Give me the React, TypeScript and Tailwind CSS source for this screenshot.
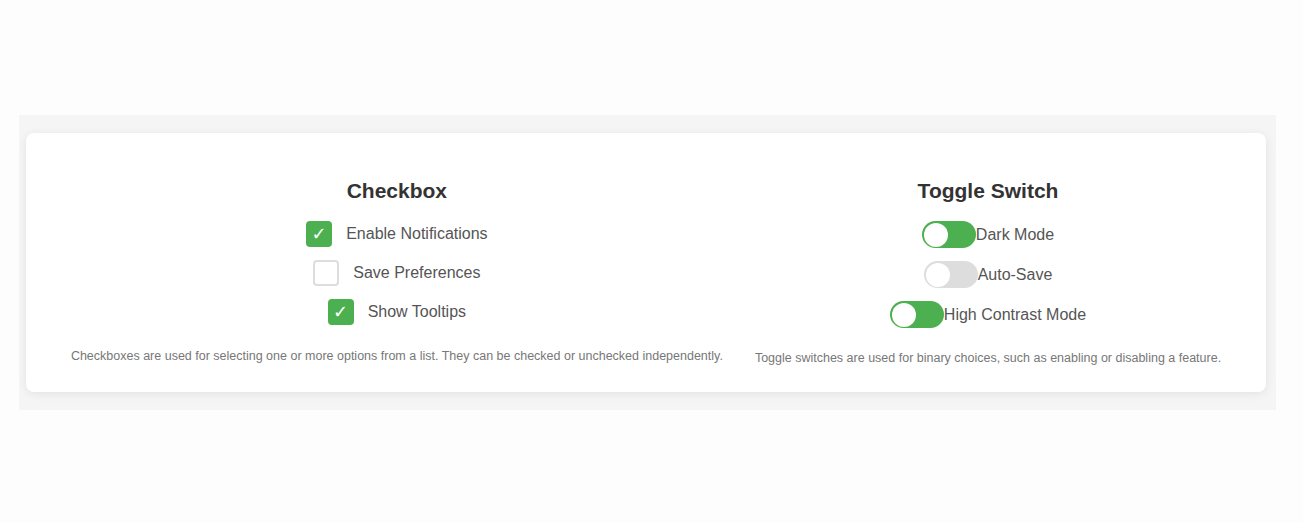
import React, { useState } from "react";

const font = { fontFamily: '"Liberation Sans", Arial, sans-serif' };

const Checkbox = ({ label, checked, onToggle }: { label: string; checked: boolean; onToggle: () => void }) => (
  <div className="flex h-[26px] items-center gap-[14px] cursor-pointer" onClick={onToggle}>
    {checked ? (
      <span className="flex h-[26px] w-[26px] items-center justify-center rounded-[4px] bg-[#4caf50] text-[18px] leading-none text-white [font-family:'DejaVu_Sans',sans-serif]">
        ✓
      </span>
    ) : (
      <span className="h-[26px] w-[26px] rounded-[4px] border-2 border-[#dddddd] bg-white" />
    )}
    <span className="text-[16px] text-[#555555]">{label}</span>
  </div>
);

const Toggle = ({ label, on, onToggle }: { label: string; on: boolean; onToggle: () => void }) => (
  <div className="flex h-[27px] items-center cursor-pointer" onClick={onToggle}>
    <span
      className={`flex h-[27px] w-[54px] items-center rounded-full px-[2px] ${
        on ? "bg-[#4caf50]" : "bg-[#dddddd]"
      }`}
    >
      <span className="h-[24px] w-[24px] rounded-full bg-white" />
    </span>
    <span className="text-[16px] text-[#555555]">{label}</span>
  </div>
);

export default function App() {
  const [checks, setChecks] = useState([true, false, true]);
  const [toggles, setToggles] = useState([true, false, true]);

  const flipCheck = (i: number) => setChecks(checks.map((c, j) => (j === i ? !c : c)));
  const flipToggle = (i: number) => setToggles(toggles.map((t, j) => (j === i ? !t : t)));

  return (
    <div className="flex h-[523px] items-center bg-[#fdfdfd]" style={font}>
      <div className="ml-[19px] mt-[2px] w-[1257px] bg-[#f5f5f5] py-[18px] pl-[7px] pr-[10px]">
        <div className="flex justify-center gap-8 rounded-lg bg-white pt-[46px] pb-[26px] shadow-[0_2px_10px_rgba(0,0,0,0.08)]">
          <div className="flex flex-col items-center">
            <h2 className="mb-[18px] text-[21px] font-bold leading-[24px] text-[#333333]">Checkbox</h2>
            <div className="flex flex-col items-center gap-[13px]">
              <Checkbox label="Enable Notifications" checked={checks[0]} onToggle={() => flipCheck(0)} />
              <Checkbox label="Save Preferences" checked={checks[1]} onToggle={() => flipCheck(1)} />
              <Checkbox label="Show Tooltips" checked={checks[2]} onToggle={() => flipCheck(2)} />
            </div>
            <p className="mt-[24px] text-[12.5px] leading-[15px] text-[#777777]">
              Checkboxes are used for selecting one or more options from a list. They can be checked or unchecked
              independently.
            </p>
          </div>

          <div className="flex flex-col items-center">
            <h2 className="mb-[18px] text-[21px] font-bold leading-[24px] text-[#333333]">Toggle Switch</h2>
            <div className="flex flex-col items-center gap-[13px]">
              <Toggle label="Dark Mode" on={toggles[0]} onToggle={() => flipToggle(0)} />
              <Toggle label="Auto-Save" on={toggles[1]} onToggle={() => flipToggle(1)} />
              <Toggle label="High Contrast Mode" on={toggles[2]} onToggle={() => flipToggle(2)} />
            </div>
            <p className="mt-[23px] text-[12.5px] leading-[15px] text-[#777777]">
              Toggle switches are used for binary choices, such as enabling or disabling a feature.
            </p>
          </div>
        </div>
      </div>
    </div>
  );
}
